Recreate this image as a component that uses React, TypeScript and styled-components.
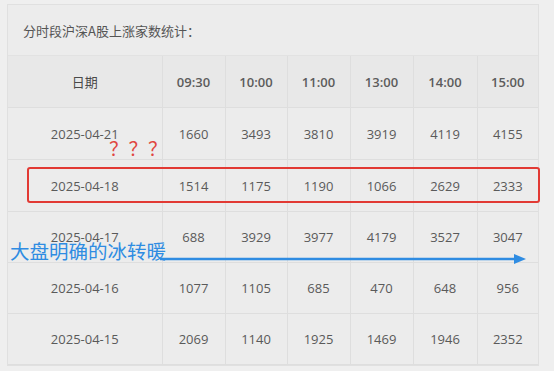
import React from "react";
import styled, { createGlobalStyle } from "styled-components";

const GlobalStyle = createGlobalStyle`
  html, body { margin: 0; padding: 0; background: #efefef; }
  body { font-family: "Open Sans", "Noto Sans CJK SC", sans-serif; }
`;

const Page = styled.div`
  position: relative;
  width: 554px;
  height: 371px;
  padding: 4px 0 0 7px;
  box-sizing: border-box;
  overflow: hidden;
`;

const Card = styled.div`
  width: 532px;
  box-sizing: border-box;
  border: 1px solid #e0e0e0;
  background: #ececec;
`;

const Title = styled.div`
  height: 50px;
  display: flex;
  align-items: center;
  padding-left: 15px;
  font-family: "Noto Sans CJK SC", sans-serif;
  font-size: 13px;
  color: #555;
  border-bottom: 1px solid #e2e2e2;
`;

const Table = styled.table`
  border-collapse: collapse;
  table-layout: fixed;
  width: 530px;
`;

const HeadCell = styled.th<{ $cjk?: boolean }>`
  height: 51px;
  padding: 0;
  background: #e8e8e8;
  border-right: 1px solid #dedede;
  border-bottom: 1px solid #dedede;
  font-size: 13px;
  font-weight: ${(p) => (p.$cjk ? 400 : 600)};
  color: ${(p) => (p.$cjk ? "#4a4a4a" : "#5c5c5c")};
  text-align: center;
  &:last-child { border-right: none; }
`;

const Cell = styled.td<{ $h: number }>`
  height: ${(p) => p.$h}px;
  padding: 0;
  border-right: 1px solid #dedede;
  border-bottom: 1px solid #dedede;
  font-size: 13px;
  color: #5a5a5a;
  text-align: center;
  &:last-child { border-right: none; }
`;

const Highlight = styled.div`
  position: absolute;
  left: 27px;
  top: 167px;
  width: 513px;
  height: 36px;
  box-sizing: border-box;
  border: 2px solid #e23a34;
  border-radius: 3px;
`;

const Question = styled.div`
  position: absolute;
  left: 109px;
  top: 138px;
  font-family: "Noto Sans CJK SC", sans-serif;
  font-size: 19px;
  line-height: 1;
  color: #e0463f;
  letter-spacing: 0.5px;
`;

const Note = styled.div`
  position: absolute;
  left: 10px;
  top: 241px;
  font-family: "Noto Sans CJK SC", sans-serif;
  font-size: 19.5px;
  line-height: 1;
  color: #2f8ce2;
`;

const Arrow = styled.svg`
  position: absolute;
  left: 160px;
  top: 252px;
`;

const widths = [154, 63, 62, 63, 63, 64, 61];
const times = ["09:30", "10:00", "11:00", "13:00", "14:00", "15:00"];
const rows: [string, number[], number][] = [
  ["2025-04-21", [1660, 3493, 3810, 3919, 4119, 4155], 51],
  ["2025-04-18", [1514, 1175, 1190, 1066, 2629, 2333], 51],
  ["2025-04-17", [688, 3929, 3977, 4179, 3527, 3047], 50],
  ["2025-04-16", [1077, 1105, 685, 470, 648, 956], 50],
  ["2025-04-15", [2069, 1140, 1925, 1469, 1946, 2352], 50],
];

export default function App() {
  return (
    <>
      <GlobalStyle />
      <Page>
        <Card>
          <Title>分时段沪深A股上涨家数统计：</Title>
          <Table>
            <colgroup>
              {widths.map((w, i) => (
                <col key={i} style={{ width: w }} />
              ))}
            </colgroup>
            <thead>
              <tr>
                <HeadCell $cjk>日期</HeadCell>
                {times.map((t) => (
                  <HeadCell key={t}>{t}</HeadCell>
                ))}
              </tr>
            </thead>
            <tbody>
              {rows.map(([d, vals, h]) => (
                <tr key={d}>
                  <Cell $h={h}>{d}</Cell>
                  {vals.map((v, i) => (
                    <Cell $h={h} key={i}>{v}</Cell>
                  ))}
                </tr>
              ))}
            </tbody>
          </Table>
        </Card>
        <Question>？？？</Question>
        <Highlight />
        <Note>大盘明确的冰转暖</Note>
        <Arrow width="370" height="14" viewBox="0 0 370 14">
          <line x1="0" y1="7" x2="358" y2="7" stroke="#2f8ce2" strokeWidth="2.5" />
          <polygon points="354,2 366,7 354,12" fill="#2f8ce2" />
        </Arrow>
      </Page>
    </>
  );
}
